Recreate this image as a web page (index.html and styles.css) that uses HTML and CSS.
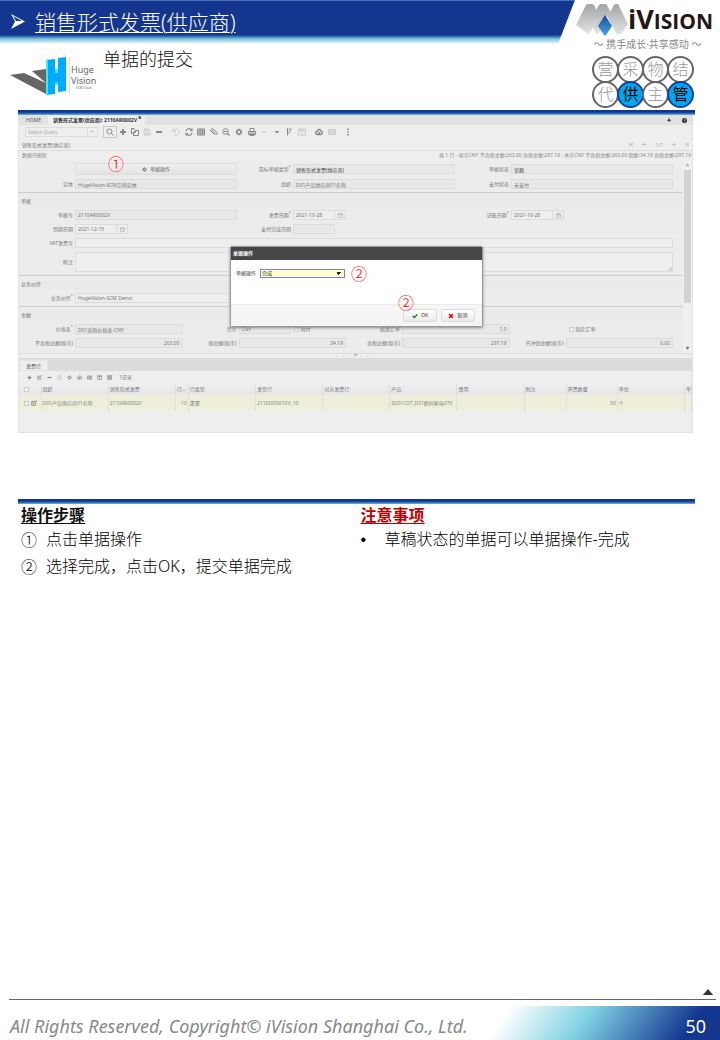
FILE: index.html
```html
<!DOCTYPE html>
<html lang="zh-CN">
<head>
<meta charset="utf-8">
<meta name="viewport" content="width=device-width, initial-scale=1">
<title>销售形式发票(供应商)</title>
<link rel="stylesheet" href="styles.css">
</head>
<body>
<svg class="defs" aria-hidden="true">
  <symbol id="search" viewBox="0 0 16 16"><circle cx="7" cy="7" r="5"/><path d="M11 11l4 4"/></symbol>
  <symbol id="plus" viewBox="0 0 16 16"><path d="M8 2v12M2 8h12" stroke-width="4"/></symbol>
  <symbol id="minus" viewBox="0 0 16 16"><path d="M2 8h12" stroke-width="4"/></symbol>
  <symbol id="copy" viewBox="0 0 16 16"><path d="M6 4V1H1v10h4M9 5h6v10H5V9zM9 5v4H5"/></symbol>
  <symbol id="save" viewBox="0 0 16 16"><path d="M2 2h9l3 3v9H2zM5 2v4h5V2M5 14v-4h6v4"/></symbol>
  <symbol id="undo" viewBox="0 0 16 16"><path d="M3 2v5h5M3 7a6 6 0 1 1 1 5"/></symbol>
  <symbol id="refresh" viewBox="0 0 16 16"><path d="M2 7a6 6 0 0 1 11-3M14 1v4h-4M14 9a6 6 0 0 1-11 3M2 15v-4h4" stroke-width="2.4"/></symbol>
  <symbol id="grid" viewBox="0 0 16 16"><path d="M1 2h14v12H1zM1 6h14M1 10h14M6 2v12M10.500 2v12"/></symbol>
  <symbol id="clip" viewBox="0 0 16 16"><path d="M4 5l7 7a2 2 0 0 0 3-3L6 2a3 3 0 0 0-4 4l7 7"/></symbol>
  <symbol id="zoomout" viewBox="0 0 16 16"><circle cx="7" cy="7" r="5.500"/><path d="M11 11l4 4M4 7h6" stroke-width="2.400"/></symbol>
  <symbol id="gear" viewBox="0 0 16 16"><circle cx="8" cy="8" r="4" stroke-width="3"/><path d="M8 1v3M8 12v3M1 8h3M12 8h3M3 3l2 2M11 11l2 2M13 3l-2 2M5 11l-2 2"/></symbol>
  <symbol id="print" viewBox="0 0 16 16"><path d="M4 7V1h8v6M1 7h14v6H1zM4 10h8v5H4z"/></symbol>
  <symbol id="up" viewBox="0 0 16 16"><path d="M3 10l5-5 5 5z" fill="currentColor" stroke="none"/></symbol>
  <symbol id="down" viewBox="0 0 16 16"><path d="M3 6l5 5 5-5z" fill="currentColor" stroke="none"/></symbol>
  <symbol id="branch" viewBox="0 0 16 16"><path d="M5 1v14M5 10c4 0 6-3 6-8M3 2h4M9 2h4"/></symbol>
  <symbol id="columns" viewBox="0 0 16 16"><path d="M1 2h14v12H1zM8 2v12M1 5h14"/></symbol>
  <symbol id="cloud" viewBox="0 0 16 16"><path d="M4 13a3 3 0 0 1 0-6 4 4 0 0 1 8 0 3 3 0 0 1 0 6zM8 7v5M6 10l2 2 2-2" stroke-width="2.600"/></symbol>
  <symbol id="panel" viewBox="0 0 16 16"><path d="M1 3h14v10H1zM1 6h14M1 10h14M10 3v10"/></symbol>
  <symbol id="more" viewBox="0 0 16 16"><path d="M8 1v3M8 6.500v3M8 12v3" stroke-width="3"/></symbol>
  <symbol id="edit" viewBox="0 0 16 16"><path d="M12 9v5H2V4h6M6 10l1-3 6-6 2 2-6 6z"/></symbol>
  <symbol id="first" viewBox="0 0 16 16"><path d="M3 2v12M13 3L5 8l8 5"/></symbol>
  <symbol id="last" viewBox="0 0 16 16"><path d="M13 2v12M3 3l8 5-8 5"/></symbol>
  <symbol id="left" viewBox="0 0 16 16"><path d="M15 8H2M8 2L2 8l6 6"/></symbol>
  <symbol id="right" viewBox="0 0 16 16"><path d="M1 8h13M8 2l6 6-6 6"/></symbol>
  <symbol id="cal" viewBox="0 0 16 16"><path d="M1 3h14v11H1zM1 6h14M5 1v3M11 1v3"/></symbol>
  <symbol id="check" viewBox="0 0 16 16"><path d="M2 8l4 4 8-8" stroke-width="4"/></symbol>
  <symbol id="cross" viewBox="0 0 16 16"><path d="M3 3l10 10M13 3L3 13" stroke-width="4"/></symbol>
</svg>

<header class="top">
  <div class="top-main">
    <div class="bar">
      <svg class="arrow" viewBox="0 0 14 15"><path d="M0 0l14 7.500L0 15l4-7.500z" fill="#fff"/><path d="M2 2l9 5H5z" fill="#14368f"/></svg>
      <h1>销售形式发票(供应商)</h1>
    </div>
    <div class="intro">
      <div class="huge">
        <svg viewBox="0 0 56 38"><path d="M0 18l14-2 22 10v11z" fill="#666"/><path d="M22 14l14-2v14z" fill="#666"/><path d="M36 3l9-1v14h3V1l8-1v34l-8 1V25h-3v12l-9 1z" fill="#0af"/><path d="M36 3l2-1v35l-2 1zM45 16h3v-4h-3zM45 25h3v3h-3z" fill="#35f0f5"/></svg>
        <div class="huge-text"><span>Huge</span><span>Vision</span><small>SCM Cloud</small></div>
      </div>
      <h2>单据的提交</h2>
    </div>
  </div>
  <div class="brand">
    <div class="logo">
      <svg viewBox="0 0 52 32">
        <defs><linearGradient id="silver" x2="0" y2="1"><stop stop-color="#a2a4a6"/><stop offset="1" stop-color="#e4e4e5"/></linearGradient>
        <linearGradient id="blue" x2="0" y2="1"><stop stop-color="#0f4e96"/><stop offset="1" stop-color="#49a6e4"/></linearGradient></defs>
        <path d="M0 21L10 1q1-1 2-1h4q1 0 2 1l5 10-9 18q-1 2-3 0z" fill="url(#silver)"/>
        <path d="M18 10l5-9q1-1 2-1h4q1 0 2 1l14 28q-2 3-5 0l-9-17-8 17q-1 2-3 0l-5-9z" fill="url(#silver)"/>
        <path d="M33 10l5-9q1-1 2-1h2l10 20-6 9q-2 2-3 0z" fill="url(#silver)"/>
        <path d="M29 11l7 11-6 9q-1 1-2 0l-6-9z" fill="url(#blue)"/>
      </svg>
      <span class="wordmark">iV<span>ISION</span></span>
    </div>
    <p class="slogan">～ 携手成长·共享感动 ～</p>
    <div class="tags"><span>营</span><span>采</span><span>物</span><span>结</span><span>代</span><span class="on">供</span><span>主</span><span class="on">管</span></div>
  </div>
</header>

<main>
  <div class="rule"></div>
  <section class="app">
    <nav class="tabs">
      <a href="#home">HOME</a><a href="#invoice" class="active">销售形式发票(供应商): 2110AR0002V <sup>✖</sup></a>
      <div class="tabs-end"><span>▲</span><span class="help">?</span></div>
    </nav>
    <div class="toolbar">
      <select class="query" aria-label="Select Query"><option>Select Query</option></select>
      <div class="tools g1">
        <button class="boxed" aria-label="查询"><svg><use href="#search"/></svg></button><button aria-label="新增"><svg><use href="#plus"/></svg></button><button aria-label="复制"><svg><use href="#copy"/></svg></button><button class="dim" aria-label="保存"><svg><use href="#save"/></svg></button><button aria-label="删除"><svg><use href="#minus"/></svg></button>
      </div>
      <div class="tools g2">
        <button class="dim" aria-label="撤销"><svg><use href="#undo"/></svg></button><button aria-label="刷新"><svg><use href="#refresh"/></svg></button><button aria-label="表格"><svg><use href="#grid"/></svg></button><button aria-label="附件"><svg><use href="#clip"/></svg></button><button aria-label="缩放"><svg><use href="#zoomout"/></svg></button><button aria-label="设置"><svg><use href="#gear"/></svg></button><button aria-label="打印"><svg><use href="#print"/></svg></button><button class="dim" aria-label="上级"><svg><use href="#up"/></svg></button><button aria-label="下级"><svg><use href="#down"/></svg></button><button aria-label="流程"><svg><use href="#branch"/></svg></button><button class="dim" aria-label="分栏"><svg><use href="#columns"/></svg></button>
      </div>
      <div class="tools g3">
        <button aria-label="导出"><svg><use href="#cloud"/></svg></button><button class="dim" aria-label="面板"><svg><use href="#panel"/></svg></button>
      </div>
      <div class="tools g4"><button aria-label="更多"><svg><use href="#more"/></svg></button></div>
    </div>
    <div class="crumb">
      <span>销售形式发票(供应商)</span>
      <div class="pager"><button aria-label="首条"><svg><use href="#first"/></svg></button><button aria-label="上一条"><svg><use href="#left"/></svg></button><span>1/1</span><button aria-label="下一条"><svg><use href="#right"/></svg></button><button aria-label="末条"><svg><use href="#last"/></svg></button></div>
    </div>
    <div class="status"><span>数据已刷新</span><span>共 1 行 - 原币CNY 不含税金额:263.00 含税金额:297.19 - 本币CNY 不含税金额:263.00 税额:34.19 含税金额:297.19</span></div>

    <div class="form">
      <div class="form-body">
        <div class="group">
          <div class="row c3 tall">
            <div class="cell"><span class="lab"></span><button class="action"><svg><use href="#gear"/></svg>单据操作</button></div>
            <div class="cell"><label for="f1">目标单据类型<sup>*</sup></label><input id="f1" class="strong" value="销售形式发票(供应商)"></div>
            <div class="cell"><label for="f2">单据状态</label><input id="f2" class="strong" value="草稿"></div>
          </div>
          <div class="row c3">
            <div class="cell"><label for="f3">实体</label><input id="f3" value="HugeVision-SCM示例实体"></div>
            <div class="cell"><label for="f4">组织</label><input id="f4" value="D01产品供应商01名称"></div>
            <div class="cell"><label for="f5">支付状态</label><input id="f5" value="未支付"></div>
          </div>
        </div>
        <div class="group">
          <h3>单据</h3>
          <div class="row c3">
            <div class="cell"><label for="f6">单据号</label><input id="f6" value="2110AR0002V"></div>
            <div class="cell"><label for="f7">发票日期<sup>*</sup></label><input id="f7" class="date open" value="2021-10-28"><button class="cal" aria-label="选择日期"><svg><use href="#cal"/></svg></button></div>
            <div class="cell"><label for="f8">记账日期<sup>*</sup></label><input id="f8" class="date open" value="2021-10-28"><button class="cal" aria-label="选择日期"><svg><use href="#cal"/></svg></button></div>
          </div>
          <div class="row c3">
            <div class="cell"><label for="f9">到期日期</label><input id="f9" class="date open" value="2021-12-15"><button class="cal" aria-label="选择日期"><svg><use href="#cal"/></svg></button></div>
            <div class="cell"><label for="f10">支付完成日期</label><input id="f10" class="date"></div>
          </div>
          <div class="row"><div class="cell"><label for="f11">VAT发票号</label><input id="f11" class="open"></div></div>
          <div class="row note"><div class="cell"><label for="f12">附注</label><textarea id="f12"></textarea></div></div>
        </div>
        <div class="group">
          <h3>业务伙伴</h3>
          <div class="row c3"><div class="cell"><label for="f13">业务伙伴<sup>*</sup></label><input id="f13" class="open" value="HugeVision-SCM Demo"></div></div>
        </div>
        <div class="group last">
          <h3>金额</h3>
          <div class="row c4">
            <div class="cell"><label for="f14">价格表<sup>*</sup></label><input id="f14" value="D01采购价格表-CNY"></div>
            <div class="cell"><label for="f15">货币</label><input id="f15" class="half" value="CNY"><label class="tick"><input type="checkbox">预付</label></div>
            <div class="cell"><label for="f16">结算汇率</label><input id="f16" class="num" value="1.0"></div>
            <div class="cell"><span class="lab"></span><label class="tick"><input type="checkbox">固定汇率</label></div>
          </div>
          <div class="row c4">
            <div class="cell"><label for="f17">不含税总额(原币)</label><input id="f17" class="num" value="263.00"></div>
            <div class="cell"><label for="f18">税总额(原币)</label><input id="f18" class="num" value="34.19"></div>
            <div class="cell"><label for="f19">含税总额(原币)</label><input id="f19" class="num" value="297.19"></div>
            <div class="cell"><label for="f20">已冲销金额(原币)</label><input id="f20" class="num" value="0.00"></div>
          </div>
        </div>
      </div>
      <div class="scroll"><span>▲</span><div class="thumb"></div><span class="dn">▼</span></div>
    </div>
    <div class="splitter"><span>—</span><span>▼</span><span>—</span></div>

    <nav class="subtabs"><a href="#lines">发票行</a></nav>
    <div class="linebar">
      <div class="tools">
        <button aria-label="新增行"><svg><use href="#plus"/></svg></button><button aria-label="编辑行"><svg><use href="#edit"/></svg></button><button aria-label="删除行"><svg><use href="#minus"/></svg></button><button class="dim" aria-label="保存行"><svg><use href="#save"/></svg></button><button aria-label="行设置"><svg><use href="#gear"/></svg></button><button aria-label="导出行"><svg><use href="#cloud"/></svg></button><button aria-label="行面板"><svg><use href="#panel"/></svg></button><button aria-label="行分栏"><svg><use href="#columns"/></svg></button><button aria-label="行表格"><svg><use href="#grid"/></svg></button>
      </div>
      <span>1记录</span>
    </div>
    <table class="lines">
      <colgroup><col class="w22"><col class="w67"><col class="w67"><col class="w13"><col class="w67"><col class="w67"><col class="w67"><col class="w67"><col class="w67"><col class="w42"><col class="w51"><col class="w67"><col class="w7"></colgroup>
      <thead><tr><th><input type="checkbox" aria-label="全选"></th><th>组织</th><th>销售形式发票</th><th>行...</th><th>行类型</th><th>发货行</th><th>对方发票行</th><th>产品</th><th>费用</th><th>附注</th><th>开票数量</th><th>单位</th><th>单</th></tr></thead>
      <tbody><tr><td><input type="checkbox" aria-label="选择行"> <svg><use href="#edit"/></svg></td><td>D01产品供应商01名称</td><td>2110AR0002V</td><td class="num">10</td><td class="dark">正常</td><td>2110DO0010V_10</td><td></td><td>SD01C07_D01数码家电07X</td><td></td><td></td><td class="num">50</td><td>个</td><td></td></tr></tbody>
    </table>

    <span class="mark m1">①</span>
    <div class="modal" role="dialog" aria-labelledby="mt">
      <div class="modal-head" id="mt">单据操作</div>
      <div class="modal-body">
        <label for="op">单据操作</label>
        <select id="op"><option>完成</option></select>
        <span class="mark">②</span>
      </div>
      <div class="modal-foot">
        <button><svg class="ok"><use href="#check"/></svg>OK</button>
        <button><svg class="no"><use href="#cross"/></svg>取消</button>
      </div>
      <span class="mark m3">②</span>
    </div>
  </section>

  <div class="rule second"></div>
  <div class="notes">
    <section>
      <h3>操作步骤</h3>
      <ul><li><span>①</span>点击单据操作</li><li><span>②</span>选择完成，点击OK，提交单据完成</li></ul>
    </section>
    <section class="warn">
      <h3>注意事项</h3>
      <ul><li><span>•</span>草稿状态的单据可以单据操作-完成</li></ul>
    </section>
  </div>
</main>

<footer>
  <a class="totop" href="#top" aria-label="返回顶部"><svg viewBox="0 0 12 7"><path d="M0 7l6-7 6 7z" fill="#333"/></svg></a>
  <div class="foot"><em>All Rights Reserved, Copyright© iVision Shanghai Co., Ltd.</em><span class="page">50</span></div>
</footer>
</body>
</html>
```

FILE: styles.css
```css
* { box-sizing: border-box; }

body {
  margin: 0;
  min-height: 100vh;
  display: flex;
  flex-direction: column;
  background: #fff;
  color: #111;
  font-family: "Noto Sans", "Noto Sans CJK SC", sans-serif;
}

h1, h2, h3, p, ul { margin: 0; padding: 0; font-weight: 400; }
a { color: inherit; text-decoration: none; }
svg { fill: none; stroke: currentColor; stroke-width: 2; }
.defs { position: absolute; width: 0; height: 0; }

button, input, select, textarea {
  font: inherit;
  color: inherit;
  margin: 0;
  padding: 0;
  border: 0;
  background: none;
  min-width: 0;
  border-radius: 0;
}

/* Header */
.top { display: grid; grid-template-columns: 1fr 145px; height: 110px; }
.bar {
  height: 44px;
  display: flex;
  align-items: center;
  gap: 10px;
  padding: 0 0 1px 11px;
  background: linear-gradient(#4b6fb5 0 1px, #14368f 1px 35px, #2b62a8 36px, #7cc5dc 39px, #c8e8ef 42px, #fff 44px);
  clip-path: polygon(0 0, 100% 0, calc(100% - 17px) 100%, 0 100%);
}
.arrow { width: 14px; height: 15px; stroke: none; }
h1 { color: #fff; font-size: 21px; line-height: 30px; font-weight: 300; text-decoration: underline; text-decoration-thickness: 1px; text-underline-offset: 2px; }
.intro { display: flex; gap: 8px; padding: 3px 0 0 10px; }
.huge { display: flex; gap: 3px; width: 85px; padding-top: 10px; }
.huge > svg { width: 56px; height: 38px; stroke: none; flex: none; }
.huge-text { display: flex; flex-direction: column; border-left: 1px solid #ddd; padding: 7px 0 0 1px; color: #666; font-size: 9px; line-height: 11px; }
.huge-text small { font-size: 3px; line-height: 5px; text-align: center; }
h2 { font-size: 18px; line-height: 24px; font-weight: 300; }

.brand { display: flex; flex-direction: column; }
.logo { display: flex; align-items: center; height: 37px; padding: 3px 0 0 1px; }
.logo > svg { width: 52px; height: 32px; stroke: none; flex: none; }
.wordmark { color: #231815; font-family: "Open Sans", "Noto Sans", sans-serif; font-weight: 700; font-size: 27px; line-height: 36px; white-space: nowrap; }
.wordmark span { font-size: 21px; }
.slogan { font-size: 10px; line-height: 14px; color: #888; text-align: center; white-space: nowrap; }
.tags { display: grid; grid-template-columns: repeat(4, 25px); grid-auto-rows: 25px; gap: 0; padding: 5px 0 0 17px; }
.tags span { width: 27px; height: 27px; border: 2px solid #666; border-radius: 50%; color: #999; font-size: 16px; line-height: 22px; text-align: center; font-weight: 300; }
.tags .on { background: #00a8f0; border-color: #1a3fa0; color: #000; font-weight: 400; }

/* Illustration */
.rule { height: 5px; margin: 0 25px 0 18px; background: linear-gradient(#0f3590 0 2px, #1f5aa8 3px, #6fb9d8); }
.app {
  position: relative;
  margin: 0 27px 0 18px;
  border: 1px solid #e2e2e2;
  background: #eee;
  min-height: 318px;
  font-size: 5px;
  line-height: 9px;
  color: #777;
}
.app a, .app span, .app label { white-space: nowrap; }
.app h3 { font-size: 5px; line-height: 9px; height: 9px; padding-left: 2px; color: #777; background: #eaeaea; }
.app sup { font-size: 4px; line-height: 1px; }
.tabs { display: flex; height: 9px; background: #e2e2e2; color: #555; }
.tabs a { padding: 0 7px; }
.tabs .active { background: #efefef; color: #333; font-weight: 700; padding: 0 4px 0 5px; }
.tabs-end { margin-left: auto; display: flex; gap: 11px; padding-right: 5px; color: #333; align-items: center; font-size: 4px; }
.help { width: 5px; height: 5px; line-height: 5px; border-radius: 50%; background: #333; color: #fff; text-align: center; }
.toolbar { display: flex; height: 13px; align-items: center; padding-left: 6px; }
.query { width: 73px; height: 10px; border: 1px solid #ddd; padding-left: 2px; margin-right: 5px; color: #aaa; appearance: none;
  background: linear-gradient(#bbb, #bbb) right 3px center / 3px 1px no-repeat, linear-gradient(#ddd, #ddd) right 9px center / 1px 100% no-repeat; }
.tools { display: flex; color: #888; }
.tools button { flex: 1; height: 12px; display: flex; align-items: center; justify-content: center; }
.tools svg { width: 8px; height: 8px; }
.tools .boxed { border: 1px solid #c5c8cc; }
.tools .dim { color: #ccc; }
.g1 { width: 62px; margin-right: 5px; }
.g2 { width: 138px; margin-right: 5px; }
.g3 { width: 25px; margin-right: 4px; }
.g4 { width: 12px; }
.crumb { display: flex; justify-content: space-between; height: 12px; padding: 0 3px 0 3px; margin-top: 1px; border-bottom: 1px solid #ddd; line-height: 12px; }
.pager { display: flex; gap: 8px; align-items: center; color: #aaa; }
.pager button { display: flex; }
.pager svg { width: 5px; height: 5px; }
.status { display: flex; justify-content: space-between; height: 10px; padding: 0 1px 0 3px; color: #888; }

.form { display: flex; height: 192px; overflow: hidden; background: #ececec; }
.form-body { flex: 1; min-width: 0; }
.group { display: flex; flex-direction: column; gap: 4px; padding: 4px 0 3px; border-bottom: 1px solid #ccc; }
.group:first-child { padding-top: 2px; }
.group.last { border-bottom: 0; }
.row { display: grid; height: 10px; padding-right: 10px; }
.c3 { grid-template-columns: repeat(3, 1fr); }
.c4 { grid-template-columns: repeat(4, 1fr); }
.row.tall { height: 12px; }
.row.note { height: 20px; }
.cell { display: flex; align-items: center; min-width: 0; }
.cell > label:first-child, .lab { width: 54px; margin-right: 2px; text-align: right; flex: none; color: #777; }
.cell > input { flex: 1; height: 10px; border: 1px solid #dcdcdc; background: #e8e8e8; padding: 0 2px; }
.cell > input.open { background: #eee; }
.cell > input.strong { color: #444; }
.cell > input.date { flex: none; width: 42px; }
.cell > input.half { flex: none; width: 52px; }
.num { text-align: right; }
.cal { width: 11px; height: 10px; border: 1px solid #dcdcdc; border-left: 0; display: flex; align-items: center; justify-content: center; color: #aaa; }
.cal svg { width: 5px; height: 5px; }
.cell textarea { flex: 1; height: 20px; border: 1px solid #dcdcdc; resize: none; background: linear-gradient(135deg, transparent 50%, #bbb 50% 60%, transparent 60% 75%, #bbb 75% 85%, transparent 85%) right bottom / 5px 5px no-repeat, #eee; }
.action { flex: 1; height: 12px; display: flex; gap: 3px; align-items: center; justify-content: center; border: 1px solid #dcdcdc; border-radius: 2px; background: linear-gradient(#f0f0f0, #e4e4e4); color: #666; }
.action svg { width: 5px; height: 5px; }
.tick { display: flex; align-items: center; gap: 2px; padding-left: 3px; }
input[type="checkbox"] { appearance: none; width: 5px; height: 5px; border: 1px solid #ccc; background: #f2f2f2; vertical-align: middle; }
.scroll { width: 9px; display: flex; flex-direction: column; align-items: center; background: #f0f0f0; font-size: 4px; color: #bbb; }
.thumb { width: 7px; height: 133px; background: #d3d3d3; }
.scroll .dn { margin-top: auto; color: #777; }
.splitter { height: 5px; border-top: 1px solid #ddd; display: flex; justify-content: center; gap: 8px; font-size: 4px; line-height: 4px; color: #bbb; }

.subtabs { display: flex; height: 13px; padding-top: 2px; background: #dcdcdc; color: #555; }
.subtabs a { background: #eee; padding: 1px 6px 0; border: 1px solid #e4e4e4; }
.linebar { display: flex; height: 13px; align-items: center; gap: 4px; padding-left: 5px; }
.linebar .tools { width: 91px; }
.linebar svg { width: 5px; height: 5px; }
.lines { width: 100%; table-layout: fixed; border-collapse: collapse; }
.lines th, .lines td { padding: 0 1px; border-right: 1px solid #dfdfdf; text-align: left; font-weight: 400; white-space: nowrap; overflow: hidden; }
.lines th { height: 11px; background: linear-gradient(#efefef, #e6e6e6); color: #777; }
.lines td { height: 16px; background: #eeeedb; color: #888; }
.lines td.num { text-align: right; }
.lines td.dark { color: #555; }
.lines th:first-child, .lines td:first-child { padding-left: 5px; }
.lines svg { width: 6px; height: 6px; margin-left: 1px; vertical-align: middle; color: #777; }
.w22 { width: 22px; }
.w67 { width: 67px; }
.w13 { width: 13px; }
.w42 { width: 42px; }
.w51 { width: 51px; }
.w7 { width: 7px; }

/* Dialog over the form */
.modal { position: absolute; left: 211px; top: 130px; width: 253px; border: 1px solid #999; border-radius: 2px; background: #fff; box-shadow: 0 1px 3px #888; color: #333; }
.modal-head { height: 13px; line-height: 13px; padding-left: 2px; background: #464646; color: #fff; font-weight: 700; }
.modal-body { display: flex; align-items: flex-start; height: 44px; padding: 9px 5px 0; }
.modal-body label { margin-right: 4px; }
.modal-body select { width: 85px; height: 9px; border: 1px solid #7d7de8; color: #222; padding-left: 1px; line-height: 7px; appearance: none;
  background: linear-gradient(45deg, transparent 50%, #222 50%) right 5px center / 3px 3px no-repeat, linear-gradient(315deg, transparent 50%, #222 50%) right 2px center / 3px 3px no-repeat, #ffc; }
.modal-foot { display: flex; justify-content: flex-end; gap: 4px; height: 22px; padding: 4px 7px; background: #f5f5f5; border-top: 1px solid #eaeaea; }
.modal-foot button { width: 34px; height: 13px; display: flex; align-items: center; justify-content: center; gap: 3px; border: 1px solid #ddd; border-radius: 2px; background: linear-gradient(#fff, #eaeaea); }
.modal-foot svg { width: 6px; height: 6px; }
.ok { color: #118a11; }
.no { color: #e01010; }
.mark { font-family: "Noto Sans CJK SC", sans-serif; font-size: 16px; line-height: 16px; font-weight: 300; color: #f00; }
.modal-body .mark { margin: -4px 0 0 6px; }
.m1 { position: absolute; left: 89px; top: 39px; }
.m3 { position: absolute; left: 167px; top: 47px; }

/* Steps */
.rule.second { margin-top: 66px; }
.notes { display: grid; grid-template-columns: 1fr 1fr; padding: 0 20px 0 21px; font-size: 16px; line-height: 27px; }
.notes h3 { font-size: 16px; line-height: 22px; font-weight: 700; text-decoration: underline; text-underline-offset: 2px; }
.notes ul { list-style: none; }
.notes li { display: flex; font-weight: 300; color: #000; }
.notes li span { width: 25px; flex: none; font-family: "Noto Sans CJK SC", sans-serif; }
.notes .warn li span { width: 24px; font-family: "Liberation Sans", sans-serif; }
.warn h3 { color: #c00000; }

/* Footer */
footer { margin-top: auto; }
.totop { display: flex; justify-content: flex-end; margin: 0 4px 0 9px; padding: 0 2px 4px; border-bottom: 1px solid #666; }
.totop svg { width: 12px; height: 6px; stroke: none; }
.foot { display: flex; justify-content: space-between; align-items: center; height: 34px; margin-top: 6px; padding: 6px 14px 0 10px;
  background: linear-gradient(125deg, #fff 0 15%, #7fd0e3 46%, #14368f 86%) right / 250px 100% no-repeat; }
.foot em { font-size: 18px; line-height: 24px; color: #888; }
.page { font-size: 18px; line-height: 24px; color: #fff; }
```
